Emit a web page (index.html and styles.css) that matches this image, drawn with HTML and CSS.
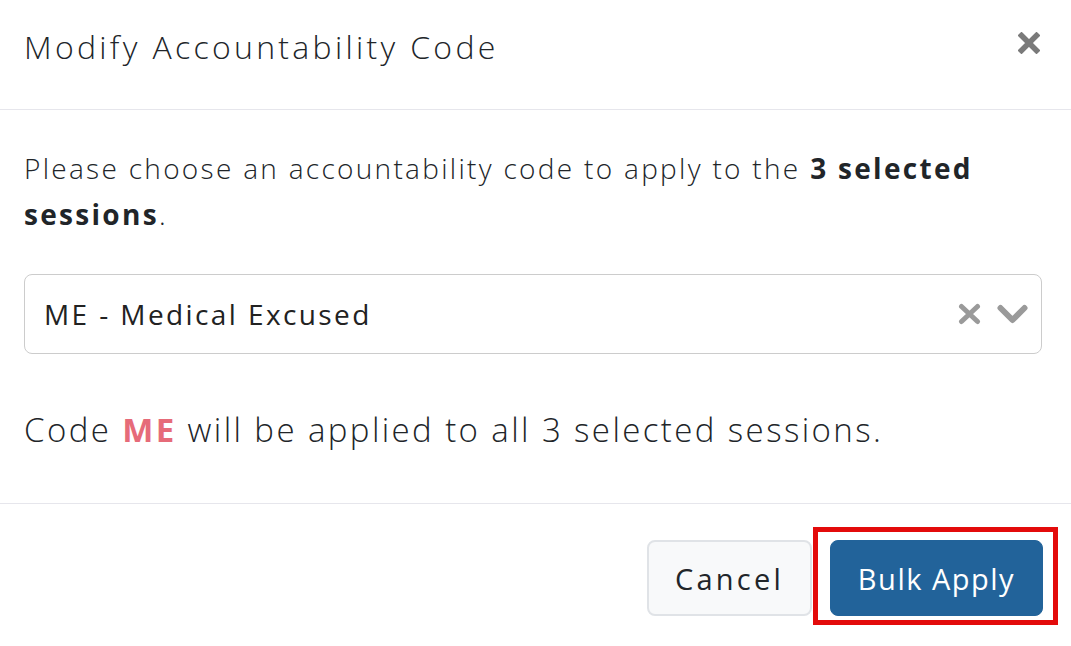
FILE: index.html
```html
<!DOCTYPE html>
<html lang="en">
<head>
<meta charset="utf-8">
<title>Modify Accountability Code</title>
<link rel="stylesheet" href="styles.css">
</head>
<body>
<div class="modal">
  <div class="modal-header">
    <h2 class="modal-title">Modify Accountability Code</h2>
    <button class="close" aria-label="Close">
      <svg width="22" height="22" viewBox="0 0 22 22"><path d="M3.5 3.5 L18.5 18.5 M18.5 3.5 L3.5 18.5" stroke="#7a7a7a" stroke-width="5.5" stroke-linecap="square" fill="none"/></svg>
    </button>
  </div>
  <div class="modal-body">
    <p class="intro">Please choose an accountability code to apply to the <strong>3 selected sessions</strong>.</p>
    <div class="select">
      <span class="select-value">ME - Medical Excused</span>
      <span class="select-icons">
        <svg class="clear" width="23" height="22" viewBox="0 0 23 22"><path d="M3.5 3.5 L19.5 18.5 M19.5 3.5 L3.5 18.5" stroke="#9a9a9a" stroke-width="5" stroke-linecap="round" fill="none"/></svg>
        <svg class="chev" width="31" height="20" viewBox="0 0 31 20"><path d="M3.5 4 L15.5 16 L27.5 4" stroke="#9a9a9a" stroke-width="6" stroke-linecap="round" stroke-linejoin="round" fill="none"/></svg>
      </span>
    </div>
    <p class="summary">Code <strong class="code">ME</strong> will be applied to all 3 selected sessions.</p>
  </div>
  <div class="modal-footer">
    <button class="btn btn-light">Cancel</button>
    <span class="highlight-wrap">
      <button class="btn btn-primary">Bulk Apply</button>
      <span class="highlight"></span>
    </span>
  </div>
</div>
</body>
</html>
```
FILE: styles.css
```css
html, body {
  margin: 0;
  padding: 0;
  background: #ffffff;
}
body {
  font-family: "Open Sans", "Lato", sans-serif;
  color: #212529;
}
.modal {
  width: 1071px;
  height: 646px;
  display: flex;
  flex-direction: column;
}
.modal-header {
  display: flex;
  justify-content: space-between;
  align-items: flex-start;
  padding: 24px 31px 39px 24px;
  border-bottom: 1px solid #e6e6ec;
}
.modal-title {
  margin: 0;
  font-weight: 300;
  font-size: 32px;
  letter-spacing: 3.3px;
  line-height: 46px;
  color: #212529;
}
.close {
  border: 0;
  background: transparent;
  padding: 0;
  margin-top: 8px;
  width: 22px;
  height: 22px;
  display: flex;
}
.modal-body {
  padding: 35px 29px 0 24px;
}
.intro {
  margin: 0;
  font-size: 28px;
  font-weight: 300;
  letter-spacing: 2.3px;
  line-height: 46px;
}
.intro strong {
  font-weight: 700;
}
.select {
  margin-top: 37px;
  height: 80px;
  box-sizing: border-box;
  border: 1px solid #cccccc;
  border-radius: 8px;
  display: flex;
  align-items: center;
  justify-content: space-between;
  padding: 0 13px 0 19px;
}
.select-value {
  font-size: 28px;
  font-weight: 400;
  letter-spacing: 2.4px;
  color: #222;
}
.select-icons {
  display: flex;
  align-items: center;
  gap: 16px;
}
.summary {
  margin: 51px 0 0 0;
  font-size: 33px;
  font-weight: 300;
  letter-spacing: 2.4px;
  line-height: 50px;
  padding-bottom: 48px;
}
.code {
  color: #e66b79;
  font-weight: 700;
}
.modal-footer {
  border-top: 1px solid #e6e6ec;
  display: flex;
  justify-content: flex-end;
  align-items: center;
  gap: 18px;
  padding: 36px 28px 0 0;
}
.btn {
  font-family: "Open Sans", "Lato", sans-serif;
  font-size: 29px;
  height: 76px;
  border-radius: 8px;
  cursor: pointer;
  box-sizing: border-box;
  padding: 0;
}
.btn-light {
  width: 165px;
  background: #f8f9fa;
  border: 2px solid #e0e3e7;
  color: #212529;
  font-weight: 400;
  letter-spacing: 3.2px;
}
.btn-primary {
  width: 213px;
  background: #22639a;
  border: 1px solid #22639a;
  color: #ffffff;
  font-weight: 400;
  letter-spacing: 1.5px;
  display: block;
}
.highlight-wrap {
  position: relative;
  display: block;
}
.highlight {
  position: absolute;
  left: -17px;
  right: -15px;
  top: -13px;
  bottom: -9px;
  border: 5px solid #e30b0b;
  pointer-events: none;
}
```
